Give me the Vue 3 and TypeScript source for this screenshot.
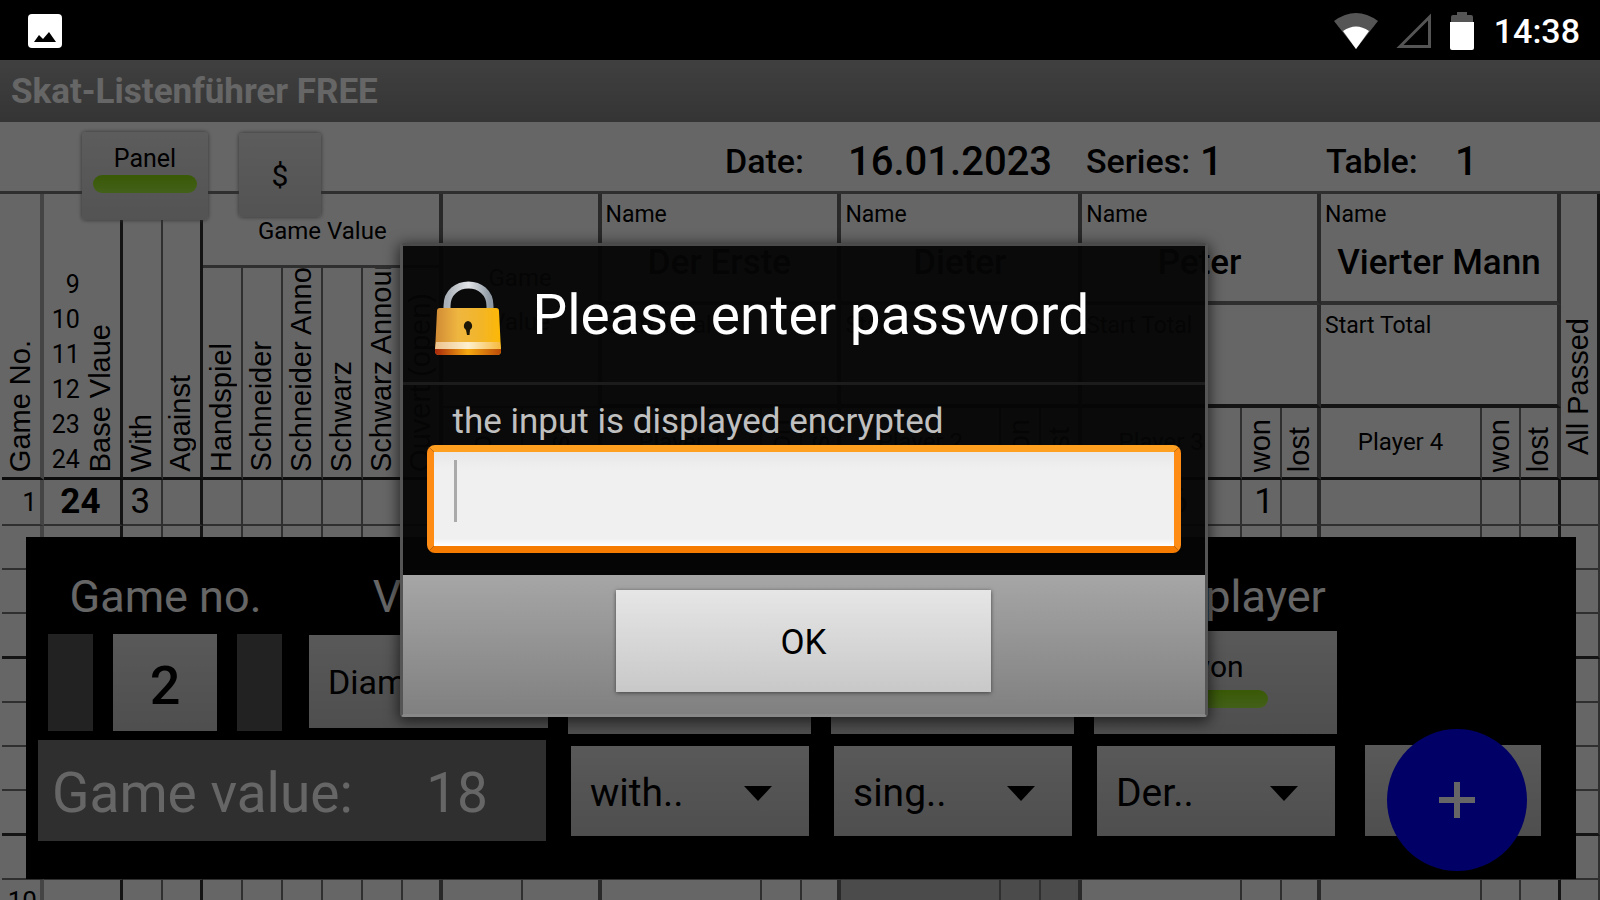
<script setup lang="ts">
import { ref } from 'vue'

interface Player {
  name: string
  seat: number
}

const columnWidths = [42, 79, 40, 40, 40, 40, 40, 40, 40, 40, 80, 79, 161, 40, 39, 160, 40, 41, 160, 40, 39, 161, 39, 40, 39]
const totalWidth = columnWidths.reduce((sum, w) => sum + w, 0)

const players: Player[] = [
  { name: 'Der Erste', seat: 1 },
  { name: 'Dieter', seat: 2 },
  { name: 'Peter', seat: 3 },
  { name: 'Vierter Mann', seat: 4 },
]
const baseValues = [9, 10, 11, 12, 23, 24]
const levels = ['Handspiel', 'Schneider', 'Schneider Announced', 'Schwarz', 'Schwarz Announced', 'Ouvert (open)']

const entries: Record<number, Record<number, string>> = {
  1: { 0: '1', 1: '24', 2: '3', 18: '96', 19: '1' },
  10: { 0: '10' },
}
const rows = Array.from({ length: 10 }, (_, i) => ({
  no: i + 1,
  cells: columnWidths.map((_, c) => entries[i + 1]?.[c] ?? ''),
}))

const picks = [
  { label: 'Matadors', value: 'with..' },
  { label: 'Bid', value: 'sing..' },
  { label: 'Declarer', value: 'Der..' },
]

const password = ref('')
const open = ref(true)
</script>

<template>
  <div class="screen">
    <header class="status">
      <svg class="picture" viewBox="0 0 34 34" aria-hidden="true">
        <rect width="34" height="34" rx="4" fill="#fff" />
        <path d="M6 28 L11 21 L15 25 L21 18 L28 28 Z" fill="#000" />
      </svg>
      <div class="indicators">
        <svg class="wifi" viewBox="0 0 44 36" aria-hidden="true">
          <path d="M0 8 Q22 -8 44 8 L22 36 Z" fill="#555" />
          <path d="M9 18 Q22 9 35 18 L22 36 Z" fill="#fff" />
        </svg>
        <svg class="signal" viewBox="0 0 36 36" aria-hidden="true">
          <path d="M4 33.500 L33.500 4 V33.500 Z" fill="none" stroke="#555" stroke-width="3" />
        </svg>
        <svg class="battery" viewBox="0 0 24 38" aria-hidden="true">
          <path d="M1 10 V5 Q1 3 3 3 H7 V0 H17 V3 H21 Q23 3 23 5 V10 Z" fill="#555" />
          <path d="M0 10 H24 V36 Q24 38 22 38 H2 Q0 38 0 36 Z" fill="#fff" />
        </svg>
        <time>14:38</time>
      </div>
    </header>

    <main class="app">
      <h1 class="title">Skat-Listenführer FREE</h1>

      <div class="sheet">
        <div class="meta">
          <span class="key">Date:</span><span class="val">16.01.2023</span>
          <span class="key">Series:</span><span class="val">1</span>
          <span class="key">Table:</span><span class="val">1</span>
        </div>

        <table>
          <colgroup>
            <col v-for="(w, i) in columnWidths" :key="i" :style="{ width: (w / totalWidth) * 100 + '%' }" />
          </colgroup>
          <thead>
            <tr class="h-a">
              <th rowspan="4" class="soft foot"><span class="up">Game No.</span></th>
              <th rowspan="4" class="strong foot">
                <div class="base">
                  <ul><li v-for="v in baseValues" :key="v">{{ v }}</li></ul>
                  <span class="up">Base Vlaue</span>
                </div>
              </th>
              <th rowspan="4" class="foot"><span class="up">With</span></th>
              <th rowspan="4" class="strong foot"><span class="up">Against</span></th>
              <th colspan="6" class="thick mid">Game Value</th>
              <th colspan="2" rowspan="3" class="thick total">Game<br />Value</th>
              <th v-for="p in players" :key="p.seat" colspan="3" rowspan="2" class="name thick">
                <small>Name</small><strong>{{ p.name }}</strong>
              </th>
              <th rowspan="4" class="strong foot"><span class="up passed">All Passed</span></th>
            </tr>
            <tr class="h-b">
              <th v-for="(l, i) in levels" :key="l" rowspan="3" class="foot" :class="{ thick: i === 5 }">
                <span class="up level">{{ l }}</span>
              </th>
            </tr>
            <tr class="h-c">
              <th v-for="p in players" :key="p.seat" colspan="3" class="start thick"><small>Start Total</small></th>
            </tr>
            <tr class="h-d">
              <th class="foot"><span class="up">won</span></th>
              <th class="foot thick"><span class="up">lost</span></th>
              <template v-for="p in players" :key="p.seat">
                <th class="seat foot">Player {{ p.seat }}</th>
                <th class="foot"><span class="up">won</span></th>
                <th class="foot thick"><span class="up">lost</span></th>
              </template>
            </tr>
          </thead>
          <tbody>
            <tr v-for="row in rows" :key="row.no">
              <td v-for="(cell, c) in row.cells" :key="c">{{ cell }}</td>
            </tr>
          </tbody>
        </table>

        <button class="key-btn panel-btn" type="button">Panel<i class="led"></i></button>
        <button class="key-btn dollar" type="button">$</button>

        <section class="panel">
          <div class="top-row">
            <div class="group game-no">
              <h2>Game no.</h2>
              <div class="stepper">
                <button class="dim" type="button" aria-label="Previous game"></button>
                <button class="grey number" type="button">2</button>
                <button class="dim" type="button" aria-label="Next game"></button>
              </div>
            </div>
            <div class="group value">
              <h2>Value</h2>
              <select class="grey suit" aria-label="Value"><option>Diamonds</option></select>
            </div>
            <div class="group"><button class="grey tall" type="button" aria-label="Hand"></button></div>
            <div class="group"><button class="grey tall" type="button" aria-label="Schneider"></button></div>
            <div class="group">
              <h2>Solo player</h2>
              <button class="grey tall won" type="button">won<i class="led"></i></button>
            </div>
          </div>
          <div class="bottom-row">
            <div class="result"><span>Game value:</span><output>18</output></div>
            <div v-for="p in picks" :key="p.label" class="pick">
              <select class="grey" :aria-label="p.label"><option>{{ p.value }}</option></select>
              <svg viewBox="0 0 28 15" aria-hidden="true"><path d="M0 0 H28 L14 15 Z" fill="#000" /></svg>
            </div>
            <button class="grey add" type="button" aria-label="Save game"></button>
          </div>
          <button class="fab" type="button" aria-label="Add">
            <svg viewBox="0 0 38 38" aria-hidden="true"><path d="M19 1 V37 M1 19 H37" stroke="#fff" stroke-width="6" /></svg>
          </button>
        </section>
      </div>

      <div v-if="open" class="backdrop">
        <form class="dialog" role="dialog" aria-labelledby="dlg-title" @submit.prevent="open = false">
          <div class="dlg-head">
            <svg class="lock" viewBox="0 0 66 76" aria-hidden="true">
              <defs>
                <linearGradient id="gold" x1="0" x2="1" y1="0" y2="0">
                  <stop offset="0" stop-color="#d08a35" />
                  <stop offset="0.350" stop-color="#efb640" />
                  <stop offset="0.700" stop-color="#f2b528" />
                  <stop offset="1" stop-color="#fdb804" />
                </linearGradient>
                <linearGradient id="shine" x1="0" x2="1" y1="0" y2="0">
                  <stop offset="0" stop-color="#ecc28c" />
                  <stop offset="0.500" stop-color="#fdf0cf" />
                  <stop offset="1" stop-color="#f6b93c" />
                </linearGradient>
                <linearGradient id="rim" x1="0" x2="1" y1="0" y2="0">
                  <stop offset="0" stop-color="#a8280c" />
                  <stop offset="0.500" stop-color="#f5a911" />
                  <stop offset="1" stop-color="#bb4a08" />
                </linearGradient>
                <linearGradient id="steel" x1="0" x2="1" y1="0" y2="0">
                  <stop offset="0" stop-color="#a9b0b7" />
                  <stop offset="0.500" stop-color="#e3e5e8" />
                  <stop offset="1" stop-color="#8e99a3" />
                </linearGradient>
              </defs>
              <path d="M12 32 V26 C12 -2 55 -2 55 26 V32" fill="none" stroke="url(#steel)" stroke-width="7" />
              <path d="M5 28 H61 Q64 28 64 31 L66 71 Q66 75 62 75 H4 Q0 75 0 71 L2 31 Q2 28 5 28 Z" fill="url(#gold)" />
              <path d="M1 62 H65 L66 69 H0 Z" fill="url(#shine)" />
              <path d="M0 69 H66 V71 Q66 75 62 75 H4 Q0 75 0 71 Z" fill="url(#rim)" />
              <path d="M33 41 A5 5 0 0 1 35 50 L34.500 55 H32 L31 50 A5 5 0 0 1 33 41 Z" fill="#1d1708" />
            </svg>
            <h2 id="dlg-title">Please enter password</h2>
          </div>
          <div class="dlg-body">
            <label for="pw">the input is displayed encrypted</label>
            <div class="field">
              <input id="pw" v-model="password" type="password" />
              <i v-if="!password" class="caret"></i>
            </div>
          </div>
          <div class="dlg-foot"><button type="submit">OK</button></div>
        </form>
      </div>
    </main>
  </div>
</template>

<style>
body {
  background: #000;
}
</style>

<style scoped>
.screen {
  height: 100vh;
  display: flex;
  flex-direction: column;
  overflow: hidden;
  font-family: Roboto, 'Liberation Sans', sans-serif;
  color: #000;
}
.screen * {
  box-sizing: border-box;
}
button,
select,
input {
  font: inherit;
  color: inherit;
  border: 0;
  border-radius: 0;
  padding: 0;
  margin: 0;
}
h1,
h2,
ul {
  margin: 0;
  padding: 0;
  list-style: none;
}
.status {
  flex: none;
  height: 60px;
  padding: 2px 20px 0 28px;
  display: flex;
  align-items: center;
  justify-content: space-between;
  background: #000;
  color: #fff;
}
.picture {
  width: 34px;
  height: 34px;
}
.indicators {
  display: flex;
  align-items: center;
  gap: 18px;
}
.wifi {
  width: 44px;
  height: 36px;
}
.signal {
  width: 36px;
  height: 36px;
}
.battery {
  width: 24px;
  height: 38px;
}
time {
  margin-left: 2px;
  font-size: 34px;
  font-weight: 500;
}
.app {
  position: relative;
  flex: 1;
  min-height: 0;
  display: flex;
  flex-direction: column;
}
.title {
  flex: none;
  height: 62px;
  padding: 2px 0 0 11px;
  line-height: 60px;
  font-size: 35px;
  font-weight: 700;
  color: #fff;
  background: linear-gradient(#a0a0a0, #848484);
}
.sheet {
  position: relative;
  flex: 1;
  min-height: 0;
  overflow: hidden;
  background: #fff;
}
.meta {
  height: 72px;
  padding: 9px 24px 0 45%;
  display: grid;
  grid-template-columns: 128px 233px 119px 121px 134px 1fr;
  align-items: center;
  font-weight: 500;
  border-bottom: 3px solid #777;
}
.key {
  padding-left: 5px;
  font-size: 34px;
}
.val {
  font-size: 40px;
}

table {
  width: calc(100% - 2px);
  margin-left: 2px;
  table-layout: fixed;
  border-collapse: separate;
  border-spacing: 0;
}
th,
td {
  padding: 0;
  border-right: 2px solid #777;
  border-bottom: 2px solid #777;
  font-weight: 400;
  overflow: hidden;
}
th.soft {
  border-right: 4px solid #aaa;
}
th.strong {
  border-right: 3px solid #333;
}
th.thick {
  border-right: 4px solid #666;
}
th.foot {
  vertical-align: bottom;
  border-bottom: 3px solid #222;
}
.h-a {
  height: 74px;
}
.h-b {
  height: 36px;
}
.h-c {
  height: 102px;
}
.h-d {
  height: 71px;
}
.mid {
  padding: 2px 0 0 3px;
  font-size: 24px;
  border-bottom: 3px solid #777;
}
.total {
  font-size: 24px;
  line-height: 44px;
}
.up {
  display: block;
  margin: 0 auto 5px;
  padding-left: 2px;
  writing-mode: vertical-rl;
  transform: rotate(180deg);
  font-family: 'Liberation Sans', sans-serif;
  font-size: 29px;
  line-height: 30px;
  white-space: nowrap;
}
.passed {
  margin-bottom: 22px;
}
.level {
  max-height: 204px;
  overflow: hidden;
}
.base {
  display: flex;
  align-items: flex-end;
  justify-content: flex-end;
}
.base ul {
  text-align: right;
  font-size: 25px;
  line-height: 35px;
}
.base .up {
  margin: 0 3px 5px 5px;
}
.name,
.start {
  vertical-align: top;
  text-align: left;
}
th.name {
  border-bottom: 4px solid #777;
}
th.start {
  border-bottom: 4px solid #333;
}
small {
  display: block;
  padding: 6px 0 0 4px;
  font-size: 23px;
  line-height: 30px;
}
strong {
  display: block;
  padding-top: 15px;
  text-align: center;
  font-size: 35px;
  line-height: 36px;
  font-weight: 500;
}
th.seat {
  vertical-align: middle;
  font-size: 24px;
}
td {
  height: 44px;
  font-size: 35px;
  line-height: 40px;
  text-align: center;
}
tbody tr:first-child td {
  height: 46px;
}
tbody tr:nth-child(4n) td {
  height: 45px;
  border-bottom: 3px solid #333;
}
td:first-child {
  padding-right: 3px;
  text-align: right;
  font-size: 26px;
  border-right: 4px solid #aaa;
}
td:nth-child(2),
td:nth-child(3) {
  padding-right: 3px;
}
td:nth-child(2) {
  font-weight: 700;
}
td:nth-child(2),
td:nth-child(4),
td:nth-child(24) {
  border-right: 3px solid #333;
}
td:nth-child(10),
td:nth-child(12),
td:nth-child(15),
td:nth-child(18),
td:nth-child(21) {
  border-right: 4px solid #666;
}
td:nth-child(19) {
  padding-right: 52px;
  text-align: right;
}
td:nth-child(20) {
  padding-left: 6px;
}
tr:nth-child(10) td:nth-child(n + 16):nth-child(-n + 18) {
  background: #bbb;
}

.key-btn {
  position: absolute;
  background: linear-gradient(#e6e6e6, #d0d0d0);
  border-radius: 4px;
  box-shadow: 0 0 4px #777;
  font-size: 25px;
}
.panel-btn {
  left: 82px;
  top: 10px;
  width: 126px;
  height: 88px;
  padding-bottom: 15px;
}
.dollar {
  left: 239px;
  top: 11px;
  width: 82px;
  height: 84px;
  font-size: 30px;
}
.led {
  display: block;
  width: 104px;
  height: 18px;
  margin: 2px auto 0;
  border-radius: 9px;
  background: linear-gradient(#8fe010, #a8f040);
}

.panel {
  position: absolute;
  left: 26px;
  right: 24px;
  top: 415px;
  padding: 26px 33px 38px 12px;
  background: #000;
  color: #fff;
}
.grey {
  background: linear-gradient(#dedede, #c4c4c4);
  color: #000;
}
.top-row,
.bottom-row {
  display: grid;
}
.top-row {
  column-gap: 20px;
  grid-template-columns: 251px 239px 243px 243px 243px 1fr;
  align-items: end;
}
.group {
  display: flex;
  flex-direction: column;
}
h2 {
  font-weight: 400;
  font-size: 45px;
  line-height: 68px;
  text-align: center;
  white-space: nowrap;
}
.game-no h2 {
  padding-left: 4px;
}
.stepper {
  display: flex;
  gap: 20px;
  padding: 3px 7px 3px 10px;
}
.dim {
  width: 45px;
  background: #555;
}
.number {
  flex: 1;
  height: 97px;
  padding-top: 6px;
  font-size: 54px;
  font-weight: 500;
}
select {
  appearance: none;
  width: 100%;
  padding: 4px 0 0 19px;
  font-size: 39px;
}
.suit {
  height: 93px;
  margin: 4px 0 6px;
  padding-top: 0;
  font-size: 34px;
}
.tall {
  height: 103px;
  padding-bottom: 9px;
  font-size: 30px;
}
.tall .led {
  height: 18px;
  margin-top: 6px;
}
.bottom-row {
  grid-template-columns: 508px 238px 238px 238px 1fr;
  column-gap: 25px;
  align-items: center;
  margin-top: 6px;
}
.result {
  height: 101px;
  padding: 4px 58px 0 14px;
  display: flex;
  align-items: center;
  justify-content: space-between;
  background: #777;
  font-size: 55px;
}
.pick {
  position: relative;
}
.pick select {
  height: 90px;
}
.pick svg {
  position: absolute;
  right: 37px;
  top: 40px;
  width: 28px;
  height: 15px;
}
.add {
  height: 91px;
  margin: 0 2px 0 5px;
}
.fab {
  position: absolute;
  right: 49px;
  bottom: 8px;
  width: 140px;
  height: 142px;
  padding-top: 4px;
  border-radius: 50%;
  background: #00f;
}
.fab svg {
  width: 38px;
  height: 38px;
}

.backdrop {
  position: absolute;
  inset: 0;
  display: grid;
  place-items: center;
  padding-left: 7px;
  background: rgba(0, 0, 0, 0.6);
}
.dialog {
  width: 808px;
  max-width: 100%;
  border: 3px solid #555;
  border-top-color: #4a4a4a;
  border-bottom-color: #888;
  border-radius: 4px;
  box-shadow: 0 3px 14px 2px rgba(0, 0, 0, 0.6);
}
.dlg-head {
  display: flex;
  align-items: center;
  gap: 32px;
  height: 139px;
  padding: 2px 0 0 32px;
  background: rgba(5, 5, 5, 0.95);
  border-bottom: 3px solid #1c1c1c;
}
.lock {
  width: 66px;
  height: 76px;
  margin-top: 6px;
}
.dlg-head h2 {
  font-size: 55px;
  color: #fff;
}
.dlg-body {
  padding: 14px 24px 22px;
  background: rgba(5, 5, 5, 0.95);
}
label {
  display: block;
  padding-left: 26px;
  font-size: 35px;
  line-height: 46px;
  color: #c0c0c0;
}
.field {
  position: relative;
  border: 7px solid #ff8c10;
  border-color: #ffa020 #ff8c14 #f57c00;
  border-radius: 8px;
  background: #f0f0f0;
}
input {
  display: block;
  width: 100%;
  height: 94px;
  padding: 0 20px;
  font-size: 40px;
  background: linear-gradient(#e8e8e8, #f0f0f0 20%, #f0f0f0 92%, #fff);
  outline: 0;
}
.caret {
  position: absolute;
  left: 20px;
  top: 8px;
  width: 3px;
  height: 62px;
  background: #aaa;
}
.dlg-foot {
  padding: 15px 0 22px;
  display: flex;
  justify-content: center;
  background: linear-gradient(#a6a6a6, #808080);
}
.dlg-foot button {
  width: 375px;
  height: 102px;
  padding-top: 2px;
  font-size: 35px;
  background: linear-gradient(#e6e6e6, #c8c8c8);
  box-shadow: 0 1px 4px #444;
}
</style>
